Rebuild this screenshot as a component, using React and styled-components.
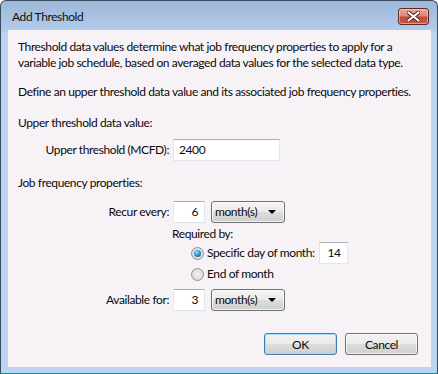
import React from "react";
import styled, { createGlobalStyle } from "styled-components";

const Global = createGlobalStyle`
  html, body {
    margin: 0;
    padding: 0;
    background: #ffffff;
  }
  body {
    font-family: Lato, "Noto Sans", sans-serif;
    font-size: 12px;
    letter-spacing: -0.4px;
    color: #0a0a0a;
  }
`;

const Window = styled.div`
  width: 438px;
  height: 374px;
  box-sizing: border-box;
  display: flex;
  flex-direction: column;
  border: 1px solid #3b4b5e;
  border-bottom-color: #1f8a9a;
  border-radius: 6px 6px 0 0;
  background: linear-gradient(to bottom, #9cb7d8 0px, #b4cceb 30px, #bcd4ef 31px, #bcd4ef 100%);
  overflow: hidden;
`;

const TitleBar = styled.div`
  height: 29px;
  display: flex;
  align-items: center;
  justify-content: space-between;
  padding: 0 8px 0 11px;
  box-sizing: border-box;
`;

const Title = styled.span`
  font-size: 12px;
  color: #111;
  margin-top: 2px;
`;

const CloseButton = styled.div`
  width: 31px;
  height: 17px;
  box-sizing: border-box;
  border: 1px solid #5e2a25;
  border-radius: 3px;
  margin-top: 1px;
  background: linear-gradient(to bottom, #e8a597 0%, #d98a7b 45%, #c4493a 55%, #c85a45 100%);
  box-shadow: inset 0 0 0 1px rgba(255, 220, 210, 0.5);
  display: flex;
  align-items: center;
  justify-content: center;
`;

const Client = styled.div`
  flex: 1;
  margin: 0 6px 6px 7px;
  background: #f7f2f6;
  padding: 9px 13px 0 10px;
  display: flex;
  flex-direction: column;
`;

const Para = styled.p`
  margin: ${(p) => p.$before || 0}px 0 ${(p) => p.$after || 0}px 0;
  line-height: 16px;
  white-space: nowrap;
`;

const Row = styled.div`
  display: flex;
  align-items: center;
  line-height: 16px;
  white-space: nowrap;
  margin: ${(p) => p.$top || 0}px 0 0 ${(p) => p.$indent || 0}px;
`;

const FieldLabel = styled.span`
  width: ${(p) => p.$width}px;
  text-align: right;
  padding-right: 4px;
  box-sizing: border-box;
`;

const TextBox = styled.div`
  width: ${(p) => p.$width}px;
  height: 22px;
  box-sizing: border-box;
  background: #fff;
  border: 1px solid #e2e6ec;
  border-top-color: #abadb3;
  display: flex;
  align-items: center;
  justify-content: ${(p) => (p.$right ? "flex-end" : "flex-start")};
  padding: 0 6px 0 5px;
  margin-left: ${(p) => p.$left || 0}px;
  margin-right: ${(p) => p.$gap || 0}px;
`;

const Select = styled.div`
  width: 74px;
  height: 22px;
  box-sizing: border-box;
  border: 1px solid #707070;
  border-radius: 3px;
  background: linear-gradient(to bottom, #f3f3f3 0%, #ebebeb 50%, #dddddd 51%, #cfcfcf 100%);
  box-shadow: inset 0 0 0 1px rgba(255, 255, 255, 0.7);
  display: flex;
  align-items: center;
  justify-content: space-between;
  padding: 0 8px 0 3px;
`;

const Arrow = styled.span`
  width: 0;
  height: 0;
  border-left: 4px solid transparent;
  border-right: 4px solid transparent;
  border-top: 4px solid #000;
`;

const Radio = styled.span`
  width: 13px;
  height: 13px;
  box-sizing: border-box;
  border-radius: 50%;
  border: 1px solid #8e8f8f;
  background: radial-gradient(circle at 50% 50%, #f4f4f4 0%, #dcdcdc 70%, #cacaca 100%);
  display: inline-flex;
  align-items: center;
  justify-content: center;
  margin-right: 3px;
  &::after {
    content: "";
    display: ${(p) => (p.$checked ? "block" : "none")};
    width: 7px;
    height: 7px;
    border-radius: 50%;
    background: radial-gradient(circle at 40% 35%, #9fe3ff 0%, #2a8ad4 50%, #0d4a8a 100%);
  }
`;

const Footer = styled.div`
  margin-top: auto;
  display: flex;
  justify-content: flex-end;
  gap: 8px;
  padding-bottom: 12px;
`;

const Button = styled.div`
  width: 73px;
  height: 22px;
  box-sizing: border-box;
  border: 1px solid ${(p) => (p.$default ? "#3c7fb1" : "#707070")};
  border-radius: 3px;
  background: linear-gradient(to bottom, #f2f2f2 0%, #ebebeb 50%, #dddddd 51%, #cfcfcf 100%);
  box-shadow: inset 0 0 0 1px ${(p) => (p.$default ? "rgba(160, 220, 250, 0.9)" : "rgba(255,255,255,0.7)")};
  display: flex;
  align-items: center;
  justify-content: center;
`;

const CloseIcon = () => (
  <svg width="13" height="11" viewBox="0 0 13 11">
    <path
      d="M1.5 1.5 L11.5 9.5 M11.5 1.5 L1.5 9.5"
      stroke="#4a1f1a"
      strokeWidth="4"
      strokeLinecap="round"
    />
    <path
      d="M1.5 1.5 L11.5 9.5 M11.5 1.5 L1.5 9.5"
      stroke="#ffffff"
      strokeWidth="2.2"
      strokeLinecap="round"
    />
  </svg>
);

export default function App() {
  return (
    <>
      <Global />
      <Window>
        <TitleBar>
          <Title>Add Threshold</Title>
          <CloseButton>
            <CloseIcon />
          </CloseButton>
        </TitleBar>
        <Client>
          <Para $after={13}>
            Threshold data values determine what job frequency properties to apply for a
            <br />
            variable job schedule, based on averaged data values for the selected data type.
          </Para>
          <Para $after={15}>
            Define an upper threshold data value and its associated job frequency properties.
          </Para>
          <Para>Upper threshold data value:</Para>
          <Row $top={8}>
            <FieldLabel $width={155}>Upper threshold (MCFD):</FieldLabel>
            <TextBox $width={107}>2400</TextBox>
          </Row>
          <Para $before={14}>Job frequency properties:</Para>
          <Row $top={10}>
            <FieldLabel $width={155}>Recur every:</FieldLabel>
            <TextBox $width={32} $right $gap={6}>6</TextBox>
            <Select>
              month(s)
              <Arrow />
            </Select>
          </Row>
          <Row $top={3} $indent={154}>Required by:</Row>
          <Row $indent={173}>
            <Radio $checked />
            Specific day of month:
            <TextBox $width={29} $right $left={4}>14</TextBox>
          </Row>
          <Row $top={2} $indent={173}>
            <Radio />
            End of month
          </Row>
          <Row $top={7}>
            <FieldLabel $width={155}>Available for:</FieldLabel>
            <TextBox $width={32} $right $gap={6}>3</TextBox>
            <Select>
              month(s)
              <Arrow />
            </Select>
          </Row>
          <Footer>
            <Button $default>OK</Button>
            <Button>Cancel</Button>
          </Footer>
        </Client>
      </Window>
    </>
  );
}
